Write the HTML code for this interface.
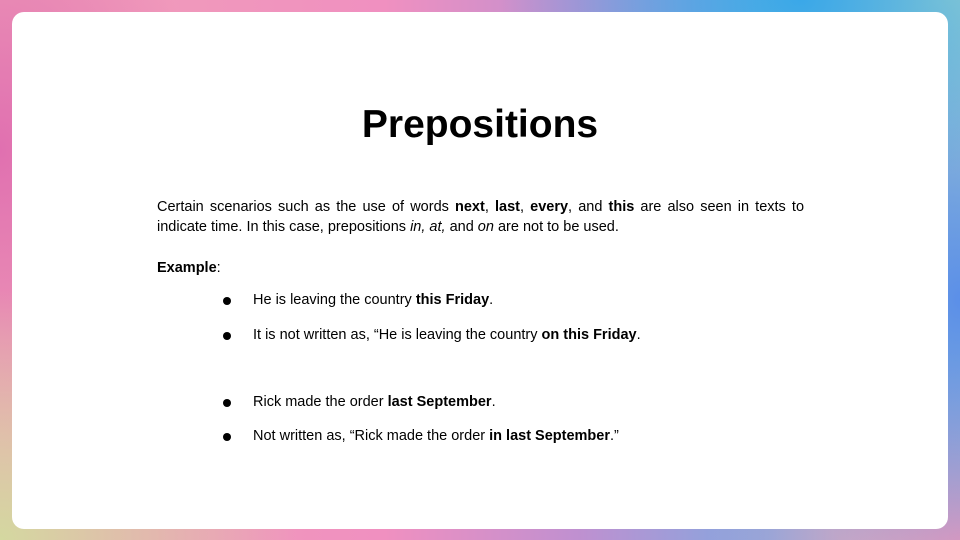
<!DOCTYPE html>
<html><head><meta charset="utf-8"><style>
html,body{margin:0;padding:0}
body{width:960px;height:540px;position:relative;overflow:hidden;font-family:"Liberation Sans",Arial,sans-serif;color:#000;
background:
radial-gradient(ellipse 300px 200px at 800px 0px,#3aa8e8 0%,rgba(58,168,232,0) 100%),
radial-gradient(ellipse 200px 300px at 960px 300px,#5b8fe8 0%,rgba(91,143,232,0) 100%),
radial-gradient(ellipse 250px 200px at 960px 540px,#f09ab8 0%,rgba(240,154,184,0) 100%),
radial-gradient(ellipse 300px 250px at 0px 540px,#d4d8a0 0%,rgba(212,216,160,0) 100%),
radial-gradient(ellipse 200px 300px at 0px 150px,#e070b0 0%,rgba(224,112,176,0) 100%),
radial-gradient(ellipse 250px 200px at 950px 0px,#b0d8c8 0%,rgba(176,216,200,0) 100%),
linear-gradient(90deg,#f0a0b8,#f090c0 40%,#c090d0 60%,#80a8e0 80%,#a0c8d0);}
.card{position:absolute;left:12px;top:12px;width:936px;height:517px;background:#fff;border-radius:12px}
h1{position:absolute;left:0;width:960px;top:102px;margin:0;text-align:center;font-size:39px;font-weight:bold;line-height:46px}
.p{position:absolute;left:157px;width:647px;top:197px;font-size:14.5px;line-height:20px;text-align:justify;text-align-last:left}
.t{position:absolute;font-size:14.5px;line-height:20px;white-space:nowrap}
.b{position:absolute;left:223px;width:8px;height:8px;border-radius:50%;background:#000}
</style></head><body>
<div class="card"></div>
<h1>Prepositions</h1>
<div class="p">Certain scenarios such as the use of words <b>next</b>, <b>last</b>, <b>every</b>, and <b>this</b> are also seen in texts to indicate time. In this case, prepositions <i>in, at,</i> and <i>on</i> are not to be used.</div>
<div class="t" style="left:157px;top:258px"><b>Example</b>:</div>
<div class="b" style="top:297px"></div><div class="t" style="left:253px;top:290px">He is leaving the country <b>this Friday</b>.</div>
<div class="b" style="top:332px"></div><div class="t" style="left:253px;top:325px">It is not written as, “He is leaving the country <b>on this Friday</b>.</div>
<div class="b" style="top:399px"></div><div class="t" style="left:253px;top:392px">Rick made the order <b>last September</b>.</div>
<div class="b" style="top:433px"></div><div class="t" style="left:253px;top:426px">Not written as, “Rick made the order <b>in last September</b>.”</div>
</body></html>
